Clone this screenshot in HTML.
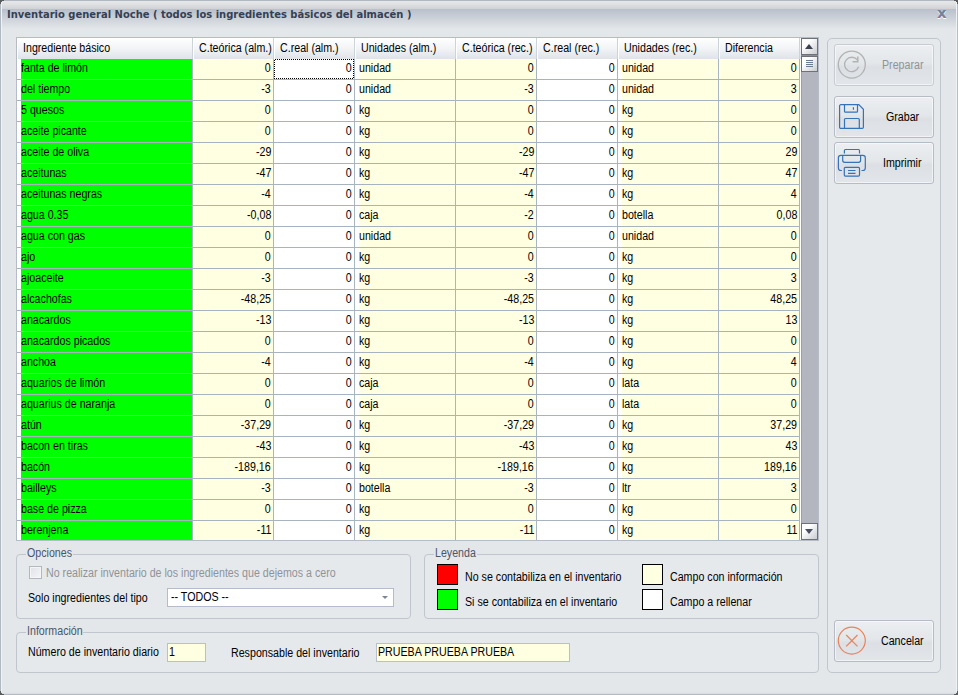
<!DOCTYPE html>
<html><head><meta charset="utf-8"><title>Inventario general Noche</title>
<style>
*{box-sizing:border-box;margin:0;padding:0}
html,body{width:958px;height:695px;overflow:hidden;background:#505256}
body{position:relative;font-family:"Liberation Sans",sans-serif;font-size:12px;letter-spacing:0;color:#000;line-height:14px}
.win{position:absolute;left:0;top:0;width:958px;height:695px;background:#e3e7ea;overflow:hidden}
.tb1{position:absolute;left:0;top:0;width:958px;height:9px;background:linear-gradient(#b2b8c2 0,#b2b8c2 1px,#e6e7e9 1px,#e0e1e3 4px,#cfd1d4 9px)}
.tb2{position:absolute;left:0;top:9px;width:958px;height:20px;background:linear-gradient(#b8c0cb,#ccd1d8 45%,#e3e7ea)}
.edgeL{position:absolute;left:0;top:0;width:2px;height:695px;background:linear-gradient(90deg,#b0b8c2 0,#b0b8c2 1px,#f1f2f3 1px)}
.edgeR{position:absolute;left:956px;top:0;width:2px;height:695px;background:linear-gradient(90deg,#f1f2f3 0,#f1f2f3 1px,#b4bcc8 1px)}
.edgeB{position:absolute;left:0;top:692px;width:958px;height:3px;background:linear-gradient(#e3e7ea 0,#dde0e4 1px,#d6d9de 2px,#b4bac2 2px)}
.cn{position:absolute;width:4px;height:4px}
.title{position:absolute;left:7px;top:8px;font-family:"DejaVu Sans",sans-serif;font-weight:bold;font-size:11px;letter-spacing:0;color:#354054;white-space:nowrap;line-height:14px;transform:scaleX(.906);transform-origin:0 0}
.close{position:absolute;left:937px;top:4px;font-family:"DejaVu Sans",sans-serif;font-weight:bold;font-size:14px;transform:scaleX(1.06);transform-origin:0 0;color:#76819a;text-shadow:0 1px 0 #fff;line-height:18px;letter-spacing:0}

.grid{position:absolute;left:16px;top:37px;width:803px;height:504px;border:1px solid #b4bcc8;background:#fff;overflow:hidden}
.hdr{position:absolute;left:0;top:0;width:784px;height:21px;background:linear-gradient(#ffffff,#f2f4f6 50%,#dfe3e8)}
.hc{position:absolute;top:0;height:21px;border-right:1px solid #cdd3db;padding:3px 0 0 6px;white-space:nowrap;overflow:hidden;box-shadow:inset 1px 0 0 #fff}
.row{position:absolute;left:0;width:783px;height:21px;border-bottom:1px solid #a9b3bf}
.c{position:absolute;top:0;height:20px;white-space:nowrap;overflow:hidden;padding-top:2px}
.c.g{background:linear-gradient(90deg,#fff 4px,#00ff00 4px);padding-left:4px}
.c.yt{background:linear-gradient(90deg,#fff 4px,#ffffe1 4px);padding-left:4px}
.c.yn{background:#ffffe1;text-align:right;padding-right:2px}
.c.wn{background:#fff;text-align:right;padding-right:2px}
.vs{position:absolute;top:21px;width:1px;height:482px;background:#aab5c2}
.focus{position:absolute;left:257px;top:21px;width:80px;height:20px;background:
repeating-linear-gradient(90deg,transparent 0,transparent 1px,#000 1px,#000 2px) 0 0/100% 1px no-repeat,
repeating-linear-gradient(90deg,#000 0,#000 1px,transparent 1px,transparent 2px) 0 100%/100% 1px no-repeat,
repeating-linear-gradient(180deg,transparent 0,transparent 1px,#000 1px,#000 2px) 0 0/1px 100% no-repeat,
repeating-linear-gradient(180deg,#000 0,#000 1px,transparent 1px,transparent 2px) 100% 0/1px 100% no-repeat}
.sb{position:absolute;left:784px;top:0;width:17px;height:502px;background:#b3b6be;box-shadow:inset 1px 0 0 #9c9fa7}
.sbb{position:absolute;left:0;width:17px;height:17px;border:1px solid #6e7278;background:linear-gradient(135deg,#ffffff 30%,#c9cbd0)}
.sbb.up{top:0}
.sbb.th{top:18px;height:16px;box-shadow:0 -1px 0 #8a8e94}
.sbb.dn{top:485px}
.sbb.up i{position:absolute;left:3px;top:5px;border:4.5px solid transparent;border-top:0;border-bottom:5px solid #3c4150;width:0;height:0}
.sbb.dn i{position:absolute;left:3px;top:5px;border:4.5px solid transparent;border-bottom:0;border-top:5px solid #4a4f5e;width:0;height:0}
.sbb.th i{display:block;margin:0 0 1px 4px;width:7px;height:1px;background:#6a7a90}
.sbb.th i:first-child{margin-top:3px}

.gb{position:absolute;border:1px solid #c0c6ce;border-radius:4px;background:#e6e9ec}
.gb>b{position:absolute;top:-8px;left:9px;height:14px;overflow:hidden;font-weight:normal;color:#4a566a;background:linear-gradient(#e3e7ea 8px,#e6e9ec 8px);padding:0 1px;white-space:nowrap;line-height:13px}
.lbl{position:absolute;white-space:nowrap}
.dis{color:#8f9398}
.chk{position:absolute;left:29px;top:566px;width:13px;height:13px;border:1px solid #b4b8be;background:linear-gradient(135deg,#dfe2e6,#f4f5f7);box-shadow:inset 0 0 0 1px #f4f5f6}
.combo{position:absolute;left:167px;top:588px;width:227px;height:19px;border:1px solid #b4bccc;background:#fff;padding:1px 0 0 3px}
.combo i{position:absolute;right:5px;top:7px;border:3px solid transparent;border-bottom:0;border-top:3px solid #7a8596;width:0;height:0}
.sw{position:absolute;width:21px;height:21px;border:1px solid #000}
.tbx{position:absolute;height:19px;border:1px solid #b8c0d0;background:#ffffe1;padding:1px 0 0 1px;white-space:nowrap}
.panel{position:absolute;left:827px;top:38px;width:114px;height:635px;border:1px solid #c0c6ce;border-radius:5px;background:#e6e9ec}
.btn{position:absolute;left:834px;width:100px;height:42px;border:1px solid #b6bcc6;border-radius:3px;background:linear-gradient(#eceef1,#e3e7ea 45%,#dcdfe4 55%,#e2e5e9);box-shadow:inset 0 0 0 1px rgba(255,255,255,.55)}
.btn>span{position:absolute;top:13px;white-space:nowrap}
.btn svg{position:absolute;left:0;top:0}
.btn.dsb{border-color:#c8ccd2}
.t{display:inline-block;transform:scaleX(.888);transform-origin:0 0;white-space:nowrap}
.r .t,.yn .t,.wn .t{transform-origin:100% 0}
</style></head><body>
<div class="win">
<div class="tb1"></div><div class="tb2"></div>
<div class="edgeL"></div><div class="edgeR"></div><div class="edgeB"></div>
<svg class="cn" style="left:0;top:0" viewBox="0 0 4 4"><path d="M0 0h4v1h-2v1h-1v2h-1z" fill="#5a5b5d"/></svg>
<svg class="cn" style="left:954px;top:0" viewBox="0 0 4 4"><path d="M4 0h-4v1h2v1h1v2h1z" fill="#5a5b5d"/></svg>
<svg class="cn" style="left:0;top:691px" viewBox="0 0 4 4"><path d="M0 4h4v-1h-2v-1h-1v-2h-1z" fill="#5a5b5d"/></svg>
<svg class="cn" style="left:954px;top:691px" viewBox="0 0 4 4"><path d="M4 4h-4v-1h2v-1h1v-2h1z" fill="#5a5b5d"/></svg>
<div class="title">Inventario general Noche ( todos los ingredientes básicos del almacén )</div>
<div class="close">x</div>

<div class="grid">
<div class="hdr">
<div class="hc" style="left:0px;width:176px"><span class="t">Ingrediente básico</span></div>
<div class="hc" style="left:176px;width:81px"><span class="t">C.teórica (alm.)</span></div>
<div class="hc" style="left:257px;width:81px"><span class="t">C.real (alm.)</span></div>
<div class="hc" style="left:338px;width:101px"><span class="t">Unidades (alm.)</span></div>
<div class="hc" style="left:439px;width:81px"><span class="t">C.teórica (rec.)</span></div>
<div class="hc" style="left:520px;width:81px"><span class="t">C.real (rec.)</span></div>
<div class="hc" style="left:601px;width:101px"><span class="t">Unidades (rec.)</span></div>
<div class="hc" style="left:702px;width:81px"><span class="t">Diferencia</span></div>
</div>
<div class="row" style="top:21px">
<div class="c g" style="left:0px;width:175px"><span class="t">fanta de limón</span></div>
<div class="c yn" style="left:176px;width:80px"><span class="t">0</span></div>
<div class="c wn" style="left:257px;width:80px"><span class="t">0</span></div>
<div class="c yt" style="left:338px;width:100px"><span class="t">unidad</span></div>
<div class="c yn" style="left:439px;width:80px"><span class="t">0</span></div>
<div class="c wn" style="left:520px;width:80px"><span class="t">0</span></div>
<div class="c yt" style="left:601px;width:100px"><span class="t">unidad</span></div>
<div class="c yn" style="left:702px;width:80px"><span class="t">0</span></div>
</div>
<div class="row" style="top:42px">
<div class="c g" style="left:0px;width:175px"><span class="t">del tiempo</span></div>
<div class="c yn" style="left:176px;width:80px"><span class="t">-3</span></div>
<div class="c wn" style="left:257px;width:80px"><span class="t">0</span></div>
<div class="c yt" style="left:338px;width:100px"><span class="t">unidad</span></div>
<div class="c yn" style="left:439px;width:80px"><span class="t">-3</span></div>
<div class="c wn" style="left:520px;width:80px"><span class="t">0</span></div>
<div class="c yt" style="left:601px;width:100px"><span class="t">unidad</span></div>
<div class="c yn" style="left:702px;width:80px"><span class="t">3</span></div>
</div>
<div class="row" style="top:63px">
<div class="c g" style="left:0px;width:175px"><span class="t">5 quesos</span></div>
<div class="c yn" style="left:176px;width:80px"><span class="t">0</span></div>
<div class="c wn" style="left:257px;width:80px"><span class="t">0</span></div>
<div class="c yt" style="left:338px;width:100px"><span class="t">kg</span></div>
<div class="c yn" style="left:439px;width:80px"><span class="t">0</span></div>
<div class="c wn" style="left:520px;width:80px"><span class="t">0</span></div>
<div class="c yt" style="left:601px;width:100px"><span class="t">kg</span></div>
<div class="c yn" style="left:702px;width:80px"><span class="t">0</span></div>
</div>
<div class="row" style="top:84px">
<div class="c g" style="left:0px;width:175px"><span class="t">aceite picante</span></div>
<div class="c yn" style="left:176px;width:80px"><span class="t">0</span></div>
<div class="c wn" style="left:257px;width:80px"><span class="t">0</span></div>
<div class="c yt" style="left:338px;width:100px"><span class="t">kg</span></div>
<div class="c yn" style="left:439px;width:80px"><span class="t">0</span></div>
<div class="c wn" style="left:520px;width:80px"><span class="t">0</span></div>
<div class="c yt" style="left:601px;width:100px"><span class="t">kg</span></div>
<div class="c yn" style="left:702px;width:80px"><span class="t">0</span></div>
</div>
<div class="row" style="top:105px">
<div class="c g" style="left:0px;width:175px"><span class="t">aceite de oliva</span></div>
<div class="c yn" style="left:176px;width:80px"><span class="t">-29</span></div>
<div class="c wn" style="left:257px;width:80px"><span class="t">0</span></div>
<div class="c yt" style="left:338px;width:100px"><span class="t">kg</span></div>
<div class="c yn" style="left:439px;width:80px"><span class="t">-29</span></div>
<div class="c wn" style="left:520px;width:80px"><span class="t">0</span></div>
<div class="c yt" style="left:601px;width:100px"><span class="t">kg</span></div>
<div class="c yn" style="left:702px;width:80px"><span class="t">29</span></div>
</div>
<div class="row" style="top:126px">
<div class="c g" style="left:0px;width:175px"><span class="t">aceitunas</span></div>
<div class="c yn" style="left:176px;width:80px"><span class="t">-47</span></div>
<div class="c wn" style="left:257px;width:80px"><span class="t">0</span></div>
<div class="c yt" style="left:338px;width:100px"><span class="t">kg</span></div>
<div class="c yn" style="left:439px;width:80px"><span class="t">-47</span></div>
<div class="c wn" style="left:520px;width:80px"><span class="t">0</span></div>
<div class="c yt" style="left:601px;width:100px"><span class="t">kg</span></div>
<div class="c yn" style="left:702px;width:80px"><span class="t">47</span></div>
</div>
<div class="row" style="top:147px">
<div class="c g" style="left:0px;width:175px"><span class="t">aceitunas negras</span></div>
<div class="c yn" style="left:176px;width:80px"><span class="t">-4</span></div>
<div class="c wn" style="left:257px;width:80px"><span class="t">0</span></div>
<div class="c yt" style="left:338px;width:100px"><span class="t">kg</span></div>
<div class="c yn" style="left:439px;width:80px"><span class="t">-4</span></div>
<div class="c wn" style="left:520px;width:80px"><span class="t">0</span></div>
<div class="c yt" style="left:601px;width:100px"><span class="t">kg</span></div>
<div class="c yn" style="left:702px;width:80px"><span class="t">4</span></div>
</div>
<div class="row" style="top:168px">
<div class="c g" style="left:0px;width:175px"><span class="t">agua 0.35</span></div>
<div class="c yn" style="left:176px;width:80px"><span class="t">-0,08</span></div>
<div class="c wn" style="left:257px;width:80px"><span class="t">0</span></div>
<div class="c yt" style="left:338px;width:100px"><span class="t">caja</span></div>
<div class="c yn" style="left:439px;width:80px"><span class="t">-2</span></div>
<div class="c wn" style="left:520px;width:80px"><span class="t">0</span></div>
<div class="c yt" style="left:601px;width:100px"><span class="t">botella</span></div>
<div class="c yn" style="left:702px;width:80px"><span class="t">0,08</span></div>
</div>
<div class="row" style="top:189px">
<div class="c g" style="left:0px;width:175px"><span class="t">agua con gas</span></div>
<div class="c yn" style="left:176px;width:80px"><span class="t">0</span></div>
<div class="c wn" style="left:257px;width:80px"><span class="t">0</span></div>
<div class="c yt" style="left:338px;width:100px"><span class="t">unidad</span></div>
<div class="c yn" style="left:439px;width:80px"><span class="t">0</span></div>
<div class="c wn" style="left:520px;width:80px"><span class="t">0</span></div>
<div class="c yt" style="left:601px;width:100px"><span class="t">unidad</span></div>
<div class="c yn" style="left:702px;width:80px"><span class="t">0</span></div>
</div>
<div class="row" style="top:210px">
<div class="c g" style="left:0px;width:175px"><span class="t">ajo</span></div>
<div class="c yn" style="left:176px;width:80px"><span class="t">0</span></div>
<div class="c wn" style="left:257px;width:80px"><span class="t">0</span></div>
<div class="c yt" style="left:338px;width:100px"><span class="t">kg</span></div>
<div class="c yn" style="left:439px;width:80px"><span class="t">0</span></div>
<div class="c wn" style="left:520px;width:80px"><span class="t">0</span></div>
<div class="c yt" style="left:601px;width:100px"><span class="t">kg</span></div>
<div class="c yn" style="left:702px;width:80px"><span class="t">0</span></div>
</div>
<div class="row" style="top:231px">
<div class="c g" style="left:0px;width:175px"><span class="t">ajoaceite</span></div>
<div class="c yn" style="left:176px;width:80px"><span class="t">-3</span></div>
<div class="c wn" style="left:257px;width:80px"><span class="t">0</span></div>
<div class="c yt" style="left:338px;width:100px"><span class="t">kg</span></div>
<div class="c yn" style="left:439px;width:80px"><span class="t">-3</span></div>
<div class="c wn" style="left:520px;width:80px"><span class="t">0</span></div>
<div class="c yt" style="left:601px;width:100px"><span class="t">kg</span></div>
<div class="c yn" style="left:702px;width:80px"><span class="t">3</span></div>
</div>
<div class="row" style="top:252px">
<div class="c g" style="left:0px;width:175px"><span class="t">alcachofas</span></div>
<div class="c yn" style="left:176px;width:80px"><span class="t">-48,25</span></div>
<div class="c wn" style="left:257px;width:80px"><span class="t">0</span></div>
<div class="c yt" style="left:338px;width:100px"><span class="t">kg</span></div>
<div class="c yn" style="left:439px;width:80px"><span class="t">-48,25</span></div>
<div class="c wn" style="left:520px;width:80px"><span class="t">0</span></div>
<div class="c yt" style="left:601px;width:100px"><span class="t">kg</span></div>
<div class="c yn" style="left:702px;width:80px"><span class="t">48,25</span></div>
</div>
<div class="row" style="top:273px">
<div class="c g" style="left:0px;width:175px"><span class="t">anacardos</span></div>
<div class="c yn" style="left:176px;width:80px"><span class="t">-13</span></div>
<div class="c wn" style="left:257px;width:80px"><span class="t">0</span></div>
<div class="c yt" style="left:338px;width:100px"><span class="t">kg</span></div>
<div class="c yn" style="left:439px;width:80px"><span class="t">-13</span></div>
<div class="c wn" style="left:520px;width:80px"><span class="t">0</span></div>
<div class="c yt" style="left:601px;width:100px"><span class="t">kg</span></div>
<div class="c yn" style="left:702px;width:80px"><span class="t">13</span></div>
</div>
<div class="row" style="top:294px">
<div class="c g" style="left:0px;width:175px"><span class="t">anacardos picados</span></div>
<div class="c yn" style="left:176px;width:80px"><span class="t">0</span></div>
<div class="c wn" style="left:257px;width:80px"><span class="t">0</span></div>
<div class="c yt" style="left:338px;width:100px"><span class="t">kg</span></div>
<div class="c yn" style="left:439px;width:80px"><span class="t">0</span></div>
<div class="c wn" style="left:520px;width:80px"><span class="t">0</span></div>
<div class="c yt" style="left:601px;width:100px"><span class="t">kg</span></div>
<div class="c yn" style="left:702px;width:80px"><span class="t">0</span></div>
</div>
<div class="row" style="top:315px">
<div class="c g" style="left:0px;width:175px"><span class="t">anchoa</span></div>
<div class="c yn" style="left:176px;width:80px"><span class="t">-4</span></div>
<div class="c wn" style="left:257px;width:80px"><span class="t">0</span></div>
<div class="c yt" style="left:338px;width:100px"><span class="t">kg</span></div>
<div class="c yn" style="left:439px;width:80px"><span class="t">-4</span></div>
<div class="c wn" style="left:520px;width:80px"><span class="t">0</span></div>
<div class="c yt" style="left:601px;width:100px"><span class="t">kg</span></div>
<div class="c yn" style="left:702px;width:80px"><span class="t">4</span></div>
</div>
<div class="row" style="top:336px">
<div class="c g" style="left:0px;width:175px"><span class="t">aquarios de limón</span></div>
<div class="c yn" style="left:176px;width:80px"><span class="t">0</span></div>
<div class="c wn" style="left:257px;width:80px"><span class="t">0</span></div>
<div class="c yt" style="left:338px;width:100px"><span class="t">caja</span></div>
<div class="c yn" style="left:439px;width:80px"><span class="t">0</span></div>
<div class="c wn" style="left:520px;width:80px"><span class="t">0</span></div>
<div class="c yt" style="left:601px;width:100px"><span class="t">lata</span></div>
<div class="c yn" style="left:702px;width:80px"><span class="t">0</span></div>
</div>
<div class="row" style="top:357px">
<div class="c g" style="left:0px;width:175px"><span class="t">aquarius de naranja</span></div>
<div class="c yn" style="left:176px;width:80px"><span class="t">0</span></div>
<div class="c wn" style="left:257px;width:80px"><span class="t">0</span></div>
<div class="c yt" style="left:338px;width:100px"><span class="t">caja</span></div>
<div class="c yn" style="left:439px;width:80px"><span class="t">0</span></div>
<div class="c wn" style="left:520px;width:80px"><span class="t">0</span></div>
<div class="c yt" style="left:601px;width:100px"><span class="t">lata</span></div>
<div class="c yn" style="left:702px;width:80px"><span class="t">0</span></div>
</div>
<div class="row" style="top:378px">
<div class="c g" style="left:0px;width:175px"><span class="t">atún</span></div>
<div class="c yn" style="left:176px;width:80px"><span class="t">-37,29</span></div>
<div class="c wn" style="left:257px;width:80px"><span class="t">0</span></div>
<div class="c yt" style="left:338px;width:100px"><span class="t">kg</span></div>
<div class="c yn" style="left:439px;width:80px"><span class="t">-37,29</span></div>
<div class="c wn" style="left:520px;width:80px"><span class="t">0</span></div>
<div class="c yt" style="left:601px;width:100px"><span class="t">kg</span></div>
<div class="c yn" style="left:702px;width:80px"><span class="t">37,29</span></div>
</div>
<div class="row" style="top:399px">
<div class="c g" style="left:0px;width:175px"><span class="t">bacon en tiras</span></div>
<div class="c yn" style="left:176px;width:80px"><span class="t">-43</span></div>
<div class="c wn" style="left:257px;width:80px"><span class="t">0</span></div>
<div class="c yt" style="left:338px;width:100px"><span class="t">kg</span></div>
<div class="c yn" style="left:439px;width:80px"><span class="t">-43</span></div>
<div class="c wn" style="left:520px;width:80px"><span class="t">0</span></div>
<div class="c yt" style="left:601px;width:100px"><span class="t">kg</span></div>
<div class="c yn" style="left:702px;width:80px"><span class="t">43</span></div>
</div>
<div class="row" style="top:420px">
<div class="c g" style="left:0px;width:175px"><span class="t">bacón</span></div>
<div class="c yn" style="left:176px;width:80px"><span class="t">-189,16</span></div>
<div class="c wn" style="left:257px;width:80px"><span class="t">0</span></div>
<div class="c yt" style="left:338px;width:100px"><span class="t">kg</span></div>
<div class="c yn" style="left:439px;width:80px"><span class="t">-189,16</span></div>
<div class="c wn" style="left:520px;width:80px"><span class="t">0</span></div>
<div class="c yt" style="left:601px;width:100px"><span class="t">kg</span></div>
<div class="c yn" style="left:702px;width:80px"><span class="t">189,16</span></div>
</div>
<div class="row" style="top:441px">
<div class="c g" style="left:0px;width:175px"><span class="t">bailleys</span></div>
<div class="c yn" style="left:176px;width:80px"><span class="t">-3</span></div>
<div class="c wn" style="left:257px;width:80px"><span class="t">0</span></div>
<div class="c yt" style="left:338px;width:100px"><span class="t">botella</span></div>
<div class="c yn" style="left:439px;width:80px"><span class="t">-3</span></div>
<div class="c wn" style="left:520px;width:80px"><span class="t">0</span></div>
<div class="c yt" style="left:601px;width:100px"><span class="t">ltr</span></div>
<div class="c yn" style="left:702px;width:80px"><span class="t">3</span></div>
</div>
<div class="row" style="top:462px">
<div class="c g" style="left:0px;width:175px"><span class="t">base de pizza</span></div>
<div class="c yn" style="left:176px;width:80px"><span class="t">0</span></div>
<div class="c wn" style="left:257px;width:80px"><span class="t">0</span></div>
<div class="c yt" style="left:338px;width:100px"><span class="t">kg</span></div>
<div class="c yn" style="left:439px;width:80px"><span class="t">0</span></div>
<div class="c wn" style="left:520px;width:80px"><span class="t">0</span></div>
<div class="c yt" style="left:601px;width:100px"><span class="t">kg</span></div>
<div class="c yn" style="left:702px;width:80px"><span class="t">0</span></div>
</div>
<div class="row" style="top:483px">
<div class="c g" style="left:0px;width:175px"><span class="t">berenjena</span></div>
<div class="c yn" style="left:176px;width:80px"><span class="t">-11</span></div>
<div class="c wn" style="left:257px;width:80px"><span class="t">0</span></div>
<div class="c yt" style="left:338px;width:100px"><span class="t">kg</span></div>
<div class="c yn" style="left:439px;width:80px"><span class="t">-11</span></div>
<div class="c wn" style="left:520px;width:80px"><span class="t">0</span></div>
<div class="c yt" style="left:601px;width:100px"><span class="t">kg</span></div>
<div class="c yn" style="left:702px;width:80px"><span class="t">11</span></div>
</div>
<div class="vs" style="left:175px"></div>
<div class="vs" style="left:256px"></div>
<div class="vs" style="left:337px"></div>
<div class="vs" style="left:438px"></div>
<div class="vs" style="left:519px"></div>
<div class="vs" style="left:600px"></div>
<div class="vs" style="left:701px"></div>
<div class="vs" style="left:782px"></div>
<div class="focus"></div>
<div class="sb"><div class="sbb up"><i></i></div><div class="sbb th"><i></i><i></i><i></i><i></i></div><div class="sbb dn"><i></i></div></div>
</div>

<div class="gb" style="left:16px;top:554px;width:395px;height:65px"><b style="width:47px"><span class="t">Opciones</span></b></div>
<div class="chk"></div>
<div class="lbl dis" style="left:46px;top:566px"><span class="t">No realizar inventario de los ingredientes que dejemos a cero</span></div>
<div class="lbl" style="left:28px;top:591px"><span class="t">Solo ingredientes del tipo</span></div>
<div class="combo"><span class="t">-- TODOS --</span><i></i></div>

<div class="gb" style="left:424px;top:554px;width:395px;height:65px"><b style="width:43px"><span class="t">Leyenda</span></b></div>
<div class="sw" style="left:437px;top:564px;background:#ff0000"></div>
<div class="sw" style="left:437px;top:589px;background:#00ff00"></div>
<div class="sw" style="left:642px;top:564px;background:#ffffe1"></div>
<div class="sw" style="left:642px;top:589px;background:#ffffff"></div>
<div class="lbl" style="left:465px;top:570px"><span class="t">No se contabiliza en el inventario</span></div>
<div class="lbl" style="left:465px;top:595px"><span class="t">Si se contabiliza en el inventario</span></div>
<div class="lbl" style="left:670px;top:570px"><span class="t">Campo con información</span></div>
<div class="lbl" style="left:670px;top:595px"><span class="t">Campo a rellenar</span></div>

<div class="gb" style="left:16px;top:632px;width:803px;height:41px"><b style="width:57px"><span class="t">Información</span></b></div>
<div class="lbl" style="left:28px;top:645px"><span class="t">Número de inventario diario</span></div>
<div class="tbx" style="left:167px;top:643px;width:39px"><span class="t">1</span></div>
<div class="lbl" style="left:231px;top:646px"><span class="t">Responsable del inventario</span></div>
<div class="tbx" style="left:376px;top:643px;width:194px"><span class="t">PRUEBA PRUEBA PRUEBA</span></div>

<div class="panel"></div>
<div class="btn dsb" style="top:44px"><svg width="98" height="40" viewBox="0 0 98 40" fill="none" stroke="#b2b2b2" stroke-width="1.3"><circle cx="16.800" cy="19.600" r="13.500"/><path d="M23.600 21.800a7.200 7.200 0 1 1-1.300-7"/><path d="M22.800 11.500v5.300h-5.300" stroke-width="1.500"/></svg><span class="dis" style="left:47px"><span class="t">Preparar</span></span></div>
<div class="btn" style="top:96px"><svg width="98" height="40" viewBox="0 0 98 40" fill="none" stroke="#3572b8" stroke-width="1.200"><path d="M5.800 7.700h18l4.600 4.600v17.900a1.200 1.200 0 0 1-1.200 1.200h-21.400a1.200 1.200 0 0 1-1.200-1.200v-21.300a1.200 1.200 0 0 1 1.200-1.200z"/><path d="M9.500 7.700v6.500a1 1 0 0 0 1 1h11a1 1 0 0 0 1-1v-6.500"/><path d="M18.400 10.300v2.500"/><path d="M9.500 31.400v-8.900a1 1 0 0 1 1-1h12.800a1 1 0 0 1 1 1v8.900"/></svg><span style="left:51px"><span class="t">Grabar</span></span></div>
<div class="btn" style="top:142px"><svg width="98" height="40" viewBox="0 0 98 40" fill="none" stroke="#3572b8" stroke-width="1.200"><path d="M9.400 10.500v-3a1 1 0 0 1 1-1h13.100a1 1 0 0 1 1 1v3"/><path d="M6.900 27.500h-1a2.500 2.500 0 0 1-2.500-2.500v-10.200a2.500 2.500 0 0 1 2.500-2.500h21.900a2.500 2.500 0 0 1 2.500 2.500v10.200a2.500 2.500 0 0 1-2.500 2.500h-1.300"/><path d="M7.700 12.300v5a2 2 0 0 0 2 2h13.900a2 2 0 0 0 2-2v-5"/><path d="M10.300 24.300h13.200a1 1 0 0 1 1 1v6.800a1 1 0 0 1-1 1h-13.200a1 1 0 0 1-1-1v-6.800a1 1 0 0 1 1-1z"/><path d="M13 27.500h7.500M13 30.300h7.500"/></svg><span style="left:48px"><span class="t">Imprimir</span></span></div>
<div class="btn" style="top:620px"><svg width="98" height="40" viewBox="0 0 98 40" fill="none" stroke="#e8835c" stroke-width="1.200"><circle cx="16.800" cy="19.600" r="13.500"/><path d="M11.200 14l11.300 11.300M22.500 14l-11.300 11.300"/></svg><span style="left:46px"><span class="t">Cancelar</span></span></div>
</div>
</body></html>
